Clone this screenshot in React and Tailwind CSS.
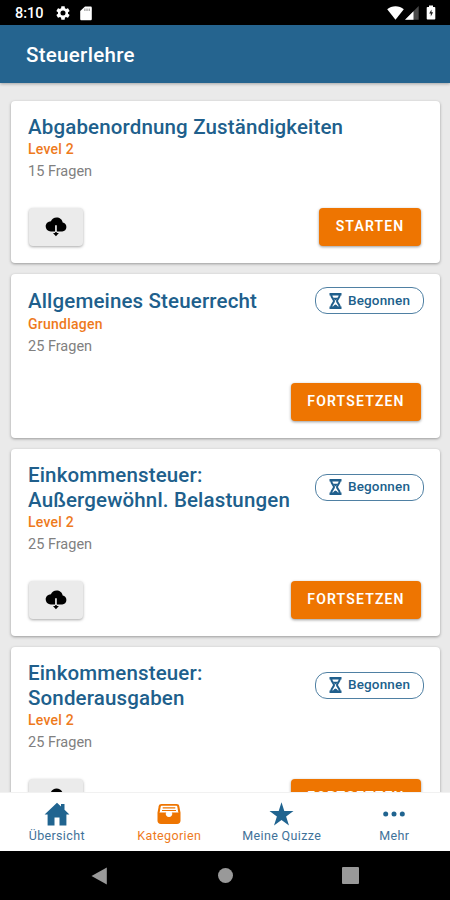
import React from 'react';

const quizzes = [
  { title: ['Abgabenordnung Zuständigkeiten'], level: 'Level 2', questions: 15, download: true, started: false },
  { title: ['Allgemeines Steuerrecht'], level: 'Grundlagen', questions: 25, download: false, started: true },
  { title: ['Einkommensteuer:', 'Außergewöhnl. Belastungen'], level: 'Level 2', questions: 25, download: true, started: true },
  { title: ['Einkommensteuer:', 'Sonderausgaben'], level: 'Level 2', questions: 25, download: true, started: true },
];

const HourglassIcon = () => (
  <svg width="13" height="16" viewBox="0 0 13 16" fill="none" stroke="#205f8c">
    <path d="M.5 1.200h12M.5 14.800h12" strokeWidth="2.400" />
    <path d="M2.300 2c0 3.200 2.700 4.300 2.700 6S2.300 10.800 2.300 14M10.700 2c0 3.200-2.700 4.300-2.700 6s2.700 2.800 2.700 6" strokeWidth="2" />
    <path d="M3.800 4.800h5.400L6.500 7.500z M4 14c.3-1.200 1.200-1.900 2.500-2.600 1.300.7 2.200 1.400 2.500 2.600z" fill="#205f8c" stroke="none" />
  </svg>
);

const CloudDownloadIcon = () => (
  <svg width="22" height="20" viewBox="0 0 22 20">
    <path d="M17.700 5.600C17.300 2.500 14.700.5 11.600.5 9 .5 6.800 1.900 5.900 4.200 3 4.300.7 6.500.7 9.300c0 2.900 2.300 5.100 5.200 5.100h4.200V8.300h1.700v6.100h5.400c2.400 0 4.200-1.900 4.200-4.400 0-2.400-1.500-4.100-3.700-4.400z" />
    <path d="M10.200 15h1.500v1h2.200l-2.950 3.200-2.950-3.200h2.200z" />
  </svg>
);

const HomeIcon = () => (
  <svg width="26" height="24" viewBox="0 0 26 24" fill="#206490">
    <path d="M13 .8 .6 12.500h3V23.500h6.900v-8h5v8h6.900V12.500h3L20.500 7.800V2h-3.500v2.600z" />
  </svg>
);

const TrayIcon = () => (
  <svg width="24" height="22" viewBox="0 0 24 22">
    <path d="M4.500 1h15c1.700 0 2.500.7 2.800 2.200l1.200 6.500V17.500c0 2.300-1.200 3.500-3.500 3.500H4C1.700 21 .5 19.800.5 17.500V9.700l1.200-6.500C2 1.700 2.800 1 4.500 1z" fill="#ee7501" />
    <path d="M5 2.800h14c.8 0 1.200.3 1.300 1l1.100 6.200h-5.900c-.3 2.600-1.400 3.900-3.500 3.900s-3.200-1.300-3.500-3.900H2.600l1.100-6.200c.1-.7.500-1 1.300-1z" fill="#fff" />
    <path d="M5.700 4.800h12.600M5 7.500h14M2.600 10h6.500M14.900 10h6.500" stroke="#ee7501" strokeWidth="1.200" />
  </svg>
);

const StarIcon = () => (
  <svg width="25" height="24" viewBox="0 0 25 24" fill="#206490">
    <path d="M12.500 .3 15.300 9H24.500L17.100 14.400 20 23.500 12.500 17.900 5 23.500 7.900 14.400.5 9H9.700z" />
  </svg>
);

const DotsIcon = () => (
  <svg width="22" height="6" viewBox="0 0 22 6" fill="#206490">
    <circle cx="2.700" cy="3" r="2.500" />
    <circle cx="11" cy="3" r="2.500" />
    <circle cx="19.300" cy="3" r="2.500" />
  </svg>
);

const StatusBar = () => (
  <div className="flex h-[25px] shrink-0 items-center justify-between bg-black pl-[15px] pr-[14px] text-white">
    <div className="flex items-center">
      <span className="w-[41px] pt-[2px] text-[14.5px] font-medium leading-[24px]">8:10</span>
      <svg className="mt-px" width="14" height="14" viewBox="2 2 20 20" fill="#fff">
        <path d="M19.140 12.940c.04-.3.060-.61.060-.94 0-.32-.02-.64-.07-.94l2.030-1.580c.18-.14.230-.41.120-.61l-1.920-3.320c-.12-.22-.37-.29-.59-.22l-2.390.960c-.5-.38-1.030-.7-1.620-.94l-.36-2.540c-.04-.24-.24-.41-.48-.41h-3.840c-.24 0-.43.170-.47.410l-.36 2.540c-.59.240-1.130.570-1.620.940l-2.390-.96c-.22-.08-.47 0-.59.220L2.740 8.870c-.12.210-.08.470.120.610l2.030 1.580c-.05.300-.09.630-.09.940s.02.640.070.940l-2.030 1.580c-.18.140-.23.410-.12.610l1.920 3.320c.12.220.370.290.590.220l2.390-.96c.5.380 1.030.700 1.620.940l.36 2.540c.05.240.240.410.480.410h3.840c.24 0 .440-.17.470-.41l.36-2.540c.59-.24 1.130-.56 1.620-.94l2.390.960c.22.080.470 0 .590-.22l1.920-3.320c.12-.22.070-.47-.12-.61zM12 15.600A3.600 3.600 0 1 1 12 8.400a3.600 3.600 0 0 1 0 7.200z" />
      </svg>
      <svg className="ml-[10px] mt-px" width="12" height="15" viewBox="0 0 12 15">
        <path d="M5 .5h5.500c.8 0 1.300.5 1.300 1.300V13c0 .8-.5 1.300-1.300 1.300h-9C.7 14.300.2 13.800.2 13V5z" fill="#fff" />
        <path d="M4.900 2.500v2.500M7 2.500v2.500M9.200 2.500v2.500" stroke="#777" strokeWidth=".9" />
      </svg>
    </div>
    <div className="flex items-center">
      <svg width="17" height="14" viewBox="0 0 17 14" fill="#fff">
        <path d="M8.500 13.700.2 3.200C2.500 1.300 5.300.3 8.500.3s6 1 8.300 2.900z" />
      </svg>
      <svg className="ml-[1px]" width="14" height="14" viewBox="0 0 14 14">
        <path d="M0 13.800 13.700 0v13.800z" fill="#4a4a4a" />
        <path d="M0 13.800 8.500 5.200v8.600z" fill="#fff" />
      </svg>
      <svg className="ml-[7px]" width="10" height="15" viewBox="0 0 10 15">
        <path d="M3 .5h4V2h1.500c.5 0 .8.300.8.800v10.900c0 .5-.3.800-.8.800h-7c-.5 0-.8-.3-.8-.8V2.800c0-.5.3-.8.8-.8H3z" fill="#fff" />
        <path d="M5.500 4.500 3.200 8.500h1.600v3l2.300-4.200H5.500z" fill="#222" />
      </svg>
    </div>
  </div>
);

const QuizCard = ({ quiz }) => (
  <div className="shrink-0 rounded-[4px] bg-white pb-[17px] pl-[17px] pr-[16px] pt-[13px] shadow-[0_1px_3px_rgba(0,0,0,0.35)]">
    <div className="flex items-center justify-between">
      <h2 className="-mb-px pt-px text-[20.5px] font-medium leading-[25px] tracking-[0.15px] text-[#205f8c]">
        {quiz.title.map(line => (
          <span key={line} className="block whitespace-nowrap">{line}</span>
        ))}
      </h2>
      {quiz.started && (
        <div className="flex h-[27px] w-[109px] items-center rounded-[12px] border border-[#4f80a3] pl-[13px] text-[#205f8c]">
          <HourglassIcon />
          <span className="ml-[6px] pb-px text-[13.5px] font-medium leading-[23px] tracking-[0.15px]">Begonnen</span>
        </div>
      )}
    </div>
    <p className="pt-px text-[14px] font-medium leading-[19px] tracking-[0.25px] text-[#ee7a1c]">{quiz.level}</p>
    <p className="mt-[2px] text-[14.5px] leading-[21px] text-[#808080]">{quiz.questions} Fragen</p>
    <div className="mt-[26px] flex h-[38px] items-center pl-px pr-[3px]">
      {quiz.download && (
        <button className="flex h-[38px] w-[54px] items-center justify-center rounded-[4px] bg-[#ebebeb] shadow-[0_1px_3px_rgba(0,0,0,0.35)]">
          <CloudDownloadIcon />
        </button>
      )}
      <button className={`ml-auto h-[38px] rounded-[4px] bg-[#ee7501] pb-[2px] text-[14px] font-semibold tracking-[1.15px] text-white shadow-[0_1px_3px_rgba(0,0,0,0.4)] ${quiz.started ? 'w-[130px]' : 'w-[102px]'}`}>
        {quiz.started ? 'FORTSETZEN' : 'STARTEN'}
      </button>
    </div>
  </div>
);

const tabs = [
  { label: 'Übersicht', icon: <HomeIcon />, color: 'text-[#3f7299]' },
  { label: 'Kategorien', icon: <TrayIcon />, color: 'text-[#ee7a1c]' },
  { label: 'Meine Quizze', icon: <StarIcon />, color: 'text-[#3f7299]' },
  { label: 'Mehr', icon: <DotsIcon />, color: 'text-[#3f7299]' },
];

const App = () => {
  return (
    <div className="flex h-[900px] w-[450px] flex-col overflow-hidden bg-[#eaeaea] font-['Roboto',sans-serif]">
      <StatusBar />

      {/* Title bar */}
      <header className="z-10 flex h-[58px] shrink-0 items-center bg-[#25648f] pl-[26px] pt-[2px] shadow-[0_1px_3px_rgba(0,0,0,0.3)]">
        <h1 className="text-[20.5px] font-medium tracking-[0.3px] text-white">Steuerlehre</h1>
      </header>

      {/* Quiz list */}
      <main className="flex min-h-0 flex-1 flex-col gap-[11px] overflow-hidden px-[11px] pr-[10px] pt-[18px]">
        {quizzes.map(quiz => (
          <QuizCard key={quiz.title.join(' ')} quiz={quiz} />
        ))}
      </main>

      {/* Tabs */}
      <nav className="z-10 grid h-[59px] shrink-0 grid-cols-4 border-t border-[#f1f1f1] bg-white">
        {tabs.map(tab => (
          <div key={tab.label} className={`flex flex-col items-center pl-px pt-[8px] ${tab.color}`}>
            <div className="flex h-[26px] items-center">{tab.icon}</div>
            <span className="text-[12.5px] leading-[18px] tracking-[0.35px]">{tab.label}</span>
          </div>
        ))}
      </nav>

      {/* Android navigation */}
      <div className="flex h-[49px] shrink-0 items-center justify-between bg-black pl-[91px] pr-[91px]">
        <svg width="17" height="18" viewBox="0 0 17 18" fill="#999">
          <path d="M15.800 .5v17L.5 9z" />
        </svg>
        <div className="h-[15px] w-[15px] rounded-full bg-[#999]" />
        <div className="h-[17px] w-[17px] rounded-[1px] bg-[#999]" />
      </div>
    </div>
  );
};

export default App;
